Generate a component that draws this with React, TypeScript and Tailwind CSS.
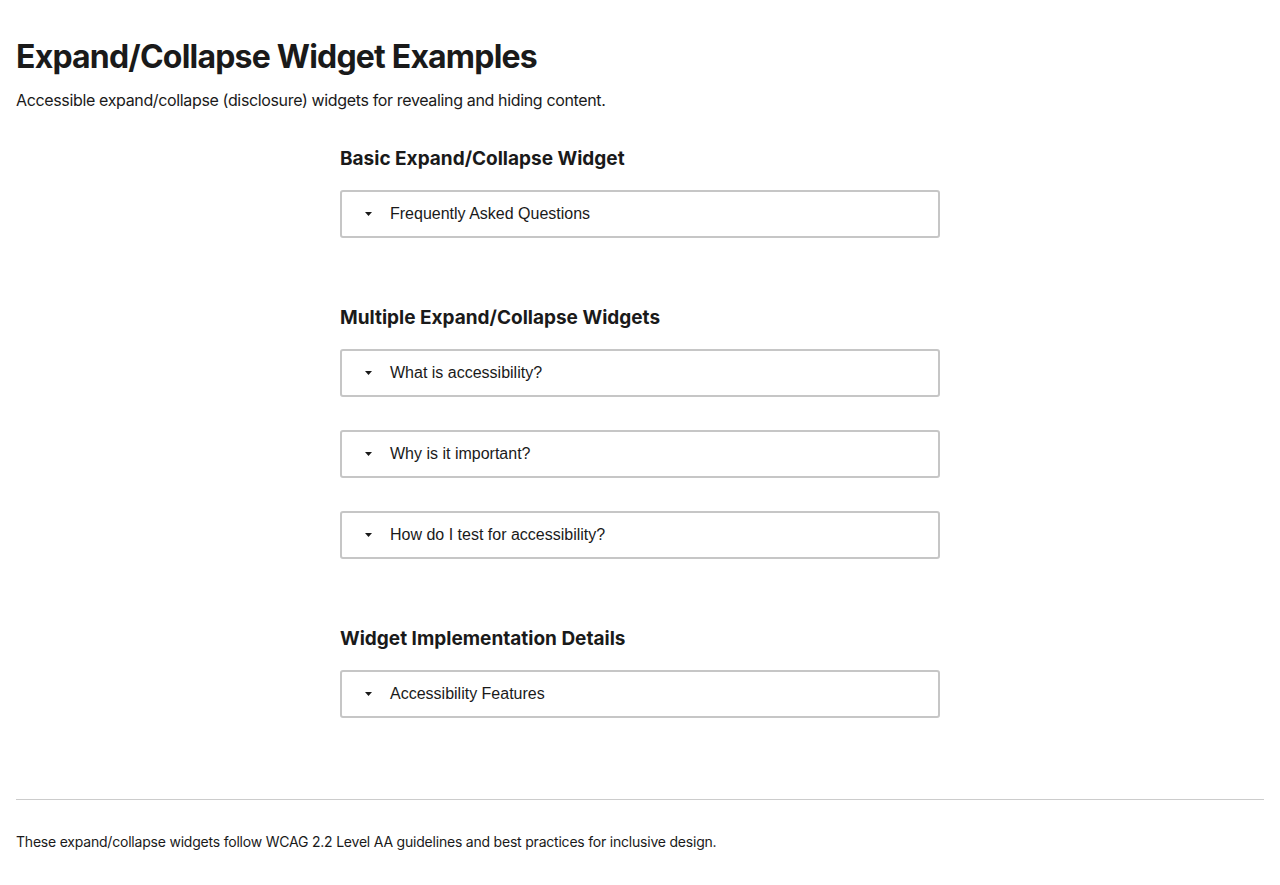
import { useState } from 'react';

interface Item {
  title: string;
  body: string;
}

const sections: { heading: string; items: Item[] }[] = [
  {
    heading: 'Basic Expand/Collapse Widget',
    items: [
      {
        title: 'Frequently Asked Questions',
        body: 'Answers to common questions about this site and its content.',
      },
    ],
  },
  {
    heading: 'Multiple Expand/Collapse Widgets',
    items: [
      { title: 'What is accessibility?', body: 'Accessibility means designing so everyone can use it.' },
      { title: 'Why is it important?', body: 'It ensures equal access for people with disabilities.' },
      { title: 'How do I test for accessibility?', body: 'Use a keyboard, a screen reader and automated checkers.' },
    ],
  },
  {
    heading: 'Widget Implementation Details',
    items: [
      { title: 'Accessibility Features', body: 'Uses aria-expanded and aria-controls on a native button.' },
    ],
  },
];

function Caret({ open }: { open: boolean }) {
  return (
    <svg width="7" height="4" viewBox="0 0 7 4" className={open ? 'rotate-180' : ''} aria-hidden="true">
      <path d="M0 0 L7 0 L3.5 4 Z" fill="#1a1a1a" />
    </svg>
  );
}

function Disclosure({ item, id }: { item: Item; id: string }) {
  const [open, setOpen] = useState(false);
  return (
    <div>
      <button
        type="button"
        aria-expanded={open}
        aria-controls={id}
        onClick={() => setOpen(!open)}
        className="w-full h-[48px] flex items-center border-2 border-[#c6c6c6] rounded-[3px] bg-white pl-[23px] text-left text-[16px] text-[#1a1a1a] font-['Liberation_Sans',Arial,sans-serif]"
      >
        <span className="w-[25px] flex items-center">
          <Caret open={open} />
        </span>
        {item.title}
      </button>
      {open && (
        <div id={id} className="px-[24px] py-3 text-[15px] text-[#333]">
          {item.body}
        </div>
      )}
    </div>
  );
}

export default function App() {
  return (
    <div className="min-h-screen bg-white px-4 pt-4 pb-6 text-[#1a1a1a] font-['Inter','Noto_Sans',sans-serif]">
      <h1 className="mt-[21px] text-[32px] leading-[40px] font-bold tracking-[-0.025em]">
        Expand/Collapse Widget Examples
      </h1>
      <p className="mt-[11px] text-[16px] leading-[24px] tracking-[-0.022em]">
        Accessible expand/collapse (disclosure) widgets for revealing and hiding content.
      </p>

      <main className="max-w-[600px] mx-auto mt-[33px] flex flex-col gap-[66px]">
        {sections.map((s, si) => (
          <section key={s.heading} className="flex flex-col">
            <h2 className="text-[19px] leading-[27px] font-bold mb-[18px]">{s.heading}</h2>
            <div className="flex flex-col gap-[33px]">
              {s.items.map((it, ii) => (
                <Disclosure key={it.title} item={it} id={`panel-${si}-${ii}`} />
              ))}
            </div>
          </section>
        ))}
      </main>

      <footer className="mt-[81px] border-t border-[#cccccc] pt-[32px]">
        <p className="text-[14px] leading-[20px] tracking-[-0.015em]">
          These expand/collapse widgets follow WCAG 2.2 Level AA guidelines and best practices for inclusive design.
        </p>
      </footer>
    </div>
  );
}
